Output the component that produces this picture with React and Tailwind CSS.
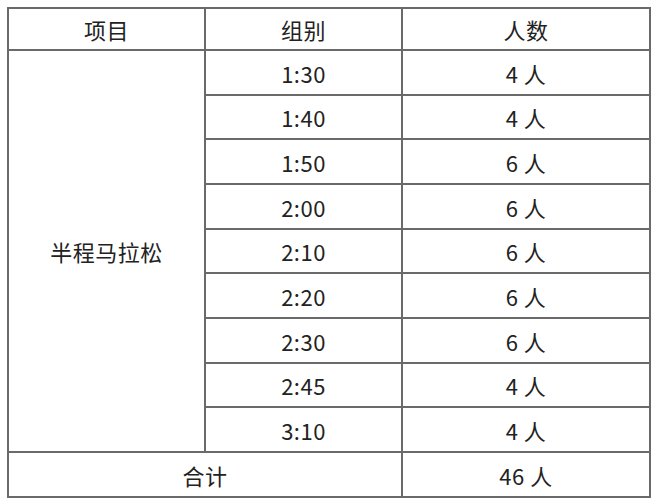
import React from "react";

const rows = [
  ["1:30", "4 人", "h-[45px]"],
  ["1:40", "4 人", "h-[44px]"],
  ["1:50", "6 人", "h-[45px]"],
  ["2:00", "6 人", "h-[45px]"],
  ["2:10", "6 人", "h-[44px]"],
  ["2:20", "6 人", "h-[45px]"],
  ["2:30", "6 人", "h-[45px]"],
  ["2:45", "4 人", "h-[44px]"],
  ["3:10", "4 人", "h-[45px]"],
];

const cell = "border-2 border-[#6a6a6a] text-center align-middle p-0";

export default function App() {
  return (
    <div className="w-[654px] h-[502px] bg-white pt-[7px] pl-[7px]" style={{ fontFamily: '"Noto Sans CJK SC", "Noto Sans", sans-serif' }}>
      <table className="border-collapse table-fixed w-[642px] text-[22px] text-[#222] leading-none tracking-[0.5px]">
        <colgroup>
          <col className="w-[197px]" />
          <col className="w-[197px]" />
          <col className="w-[248px]" />
        </colgroup>
        <tbody>
          <tr className="h-[42px]">
            <td className={cell}>项目</td>
            <td className={cell}>组别</td>
            <td className={cell}>人数</td>
          </tr>
          {rows.map(([g, n, h], i) => (
            <tr key={g} className={h}>
              {i === 0 && (
                <td className={cell} rowSpan={9}>半程马拉松</td>
              )}
              <td className={cell}>{g}</td>
              <td className={cell}>{n}</td>
            </tr>
          ))}
          <tr className="h-[45px]">
            <td className={cell} colSpan={2}>合计</td>
            <td className={cell}>46 人</td>
          </tr>
        </tbody>
      </table>
    </div>
  );
}
